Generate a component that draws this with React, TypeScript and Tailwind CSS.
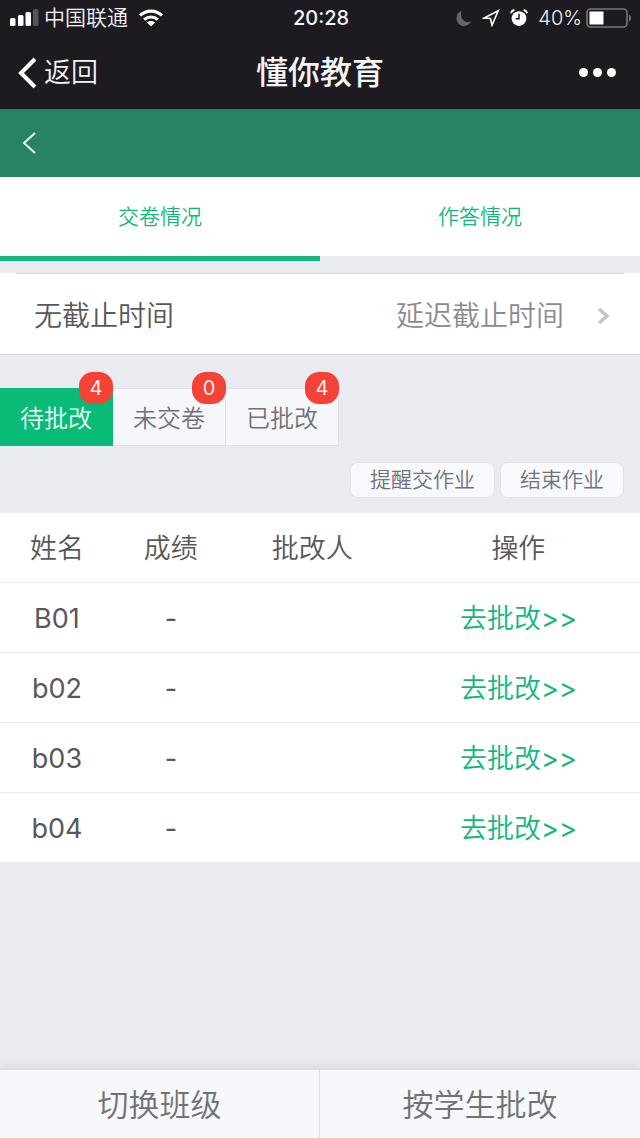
import { useState } from 'react'

interface Student {
  name: string
  score: string
  reviewer: string
}

const students: Student[] = [
  { name: 'B01', score: '-', reviewer: '' },
  { name: 'b02', score: '-', reviewer: '' },
  { name: 'b03', score: '-', reviewer: '' },
  { name: 'b04', score: '-', reviewer: '' },
]

const tabs = [
  { key: 'submit', label: '交卷情况' },
  { key: 'answer', label: '作答情况' },
]

const filters = [
  { key: 'pending', label: '待批改', count: 4 },
  { key: 'missing', label: '未交卷', count: 0 },
  { key: 'done', label: '已批改', count: 4 },
]

const StatusBar = () => (
  <div className="grid h-9 grid-cols-[1fr_auto_1fr] items-center pl-2.5 pr-2 text-xl text-gray-100">
    <div className="flex items-center">
      <svg width="30" height="18" viewBox="0 0 30 18" fill="#fff">
        <rect x="0" y="9" width="5.5" height="8" rx="1.5" />
        <rect x="8" y="6" width="5.5" height="11" rx="1.5" />
        <rect x="15.5" y="3" width="5.5" height="14" rx="1.5" />
        <rect x="23" y="0" width="5.5" height="17" rx="1.5" fill="#55545a" />
      </svg>
      <span className="ml-1 text-[21px] font-[350]">中国联通</span>
      <svg className="ml-2.5" width="26" height="18" viewBox="0 0 26 18" fill="none" stroke="#fff" strokeWidth="3.2">
        <path d="M2 6.4C8.3 0.7 17.7 0.7 24 6.4" />
        <path d="M6.2 10.6C10.2 7.1 15.8 7.1 19.8 10.6" />
        <path d="M13 17.5L8.9 13.4C11.2 11.4 14.8 11.4 17.1 13.4Z" fill="#fff" stroke="none" />
      </svg>
    </div>
    <time className="font-medium">20:28</time>
    <div className="flex items-center justify-end">
      <svg width="16" height="17" viewBox="0 0 16 17" fill="#66656b">
        <path d="M5.5 0.8C-1 3.3-1 12.8 5 15.4C9.3 17.2 13.5 15 15.2 11.6C8.4 13.6 3.2 8 5.5 0.8Z" />
      </svg>
      <svg className="ml-2.5" width="18" height="18" viewBox="0 0 18 18" fill="none" stroke="#fff" strokeWidth="1.6">
        <path d="M16.2 1.8L2.2 9L8.4 9.4L10 16.2Z" />
      </svg>
      <svg className="ml-2.5" width="18" height="18" viewBox="0 0 18 18" fill="none">
        <circle cx="9" cy="9.6" r="7.4" fill="#fff" />
        <path d="M1 4.2C1.4 2.3 2.6 1.3 4.4 1M17 4.2C16.6 2.3 15.4 1.3 13.6 1" stroke="#fff" strokeWidth="1.8" />
        <path d="M9 4.8V9.8H5.6" stroke="#1d1b20" strokeWidth="1.5" />
      </svg>
      <span className="ml-2.5 font-[350]">40%</span>
      <svg className="ml-1" width="46" height="20" viewBox="0 0 46 20">
        <rect x="1" y="1" width="40" height="18" rx="3.5" fill="none" stroke="#77767b" strokeWidth="1.6" />
        <rect x="3.5" y="3.5" width="14" height="13" fill="#fff" />
        <path d="M43 6.5C45.6 7.5 45.6 12.5 43 13.5Z" fill="#77767b" />
      </svg>
    </div>
  </div>
)

const NavBar = () => (
  <div className="grid h-[73px] grid-cols-[1fr_auto_1fr] items-center px-5 text-gray-100">
    <button type="button" className="-ml-1 flex items-center gap-1.5 justify-self-start text-[27px] font-[350]">
      <svg width="22" height="32" viewBox="0 0 22 32" fill="none" stroke="#fff" strokeWidth="4">
        <path d="M19 2L5 16L19 30" />
      </svg>
      <span className="pt-0.5">返回</span>
    </button>
    <h1 className="text-[32px] font-medium">懂你教育</h1>
    <button type="button" aria-label="更多" className="mr-1 justify-self-end">
      <svg width="37" height="10" viewBox="0 0 37 10" fill="#fff">
        <circle cx="4.5" cy="4.5" r="4.5" />
        <circle cx="18.5" cy="4.5" r="4.5" />
        <circle cx="32.5" cy="4.5" r="4.5" />
      </svg>
    </button>
  </div>
)

const App = () => {
  const [tab, setTab] = useState('submit')
  const [filter, setFilter] = useState('pending')

  return (
    <div className="flex min-h-screen flex-col bg-[#e9ebf0] font-['Inter','Noto_Sans_CJK_SC',sans-serif] text-[#58575b]">
      <header className="bg-[#1d1b20]">
        <StatusBar />
        <NavBar />
      </header>

      <div className="flex h-[68px] items-center bg-[#288264] pl-5">
        <button type="button" aria-label="后退">
          <svg width="20" height="24" viewBox="0 0 20 24" fill="none" stroke="#e6fff5" strokeWidth="2">
            <path d="M15 2L4 12L15 22" />
          </svg>
        </button>
      </div>

      <nav className="grid grid-cols-2 text-[21px] font-[350] text-[#15b67c]">
        {tabs.map(item => (
          <button
            key={item.key}
            type="button"
            onClick={() => setTab(item.key)}
            className={`border-b-[5px] ${tab === item.key ? 'border-[#15b67c]' : 'border-[#e9ebf0]'}`}
          >
            <span className="flex h-[79px] items-center justify-center bg-white">{item.label}</span>
          </button>
        ))}
      </nav>

      <section className="mt-3 border-b border-[#d9dadf] bg-white font-[350]">
        <div className="mx-4 border-t border-[#d9dadf]" />
        <div className="flex h-20 items-center justify-between pl-[34px] pr-[30px] pt-1 text-[28px]">
          <span>无截止时间</span>
          <button type="button" className="flex items-center gap-8 text-[#8b8a8f]">
            延迟截止时间
            <svg width="14" height="18" viewBox="0 0 14 18" fill="none" stroke="#c4c3c8" strokeWidth="3.5">
              <path d="M3 2L11 9L3 16" />
            </svg>
          </button>
        </div>
      </section>

      <div className="mt-[33px] flex text-2xl font-[350]">
        {filters.map(item => (
          <button
            key={item.key}
            type="button"
            onClick={() => setFilter(item.key)}
            className={`relative h-[58px] w-[113px] border-y border-r pt-1 ${
              filter === item.key
                ? 'border-[#0abb77] bg-[#0abb77] text-[#e9fff6]'
                : 'border-[#dfe1e6] bg-[#f6f7fb] text-[#727177]'
            }`}
          >
            {item.label}
            <span className="absolute -right-px -top-[17px] flex h-8 w-[34px] items-center justify-center rounded-[14px] bg-[#f44236] text-xl font-normal text-[#fdeeee]">
              {item.count}
            </span>
          </button>
        ))}
      </div>

      <div className="flex justify-end gap-[5px] px-4 pb-[15px] pt-4 text-[21px] font-[350] text-[#727177]">
        <button type="button" className="h-9 rounded-lg border border-[#e2e3e9] bg-[#f8f9fd] px-[19px]">提醒交作业</button>
        <button type="button" className="h-9 rounded-lg border border-[#e2e3e9] bg-[#f8f9fd] px-[19px]">结束作业</button>
      </div>

      <table className="w-full table-fixed bg-white text-center text-[27px]">
        <colgroup>
          <col className="w-[17.8%]" />
          <col className="w-[17.8%]" />
          <col className="w-[26.4%]" />
          <col className="w-[38%]" />
        </colgroup>
        <thead>
          <tr className="h-[69px] border-b border-[#e9e8ee]">
            <th className="pt-1 font-[350]">姓名</th>
            <th className="pt-1 font-[350]">成绩</th>
            <th className="pt-1 font-[350]">批改人</th>
            <th className="pt-1 font-[350]">操作</th>
          </tr>
        </thead>
        <tbody>
          {students.map(student => (
            <tr key={student.name} className="h-[70px] border-b border-[#e9e8ee]">
              <td className="pt-1">{student.name}</td>
              <td className="pt-1">{student.score}</td>
              <td className="pt-1">{student.reviewer}</td>
              <td className="pt-1">
                <a href="#" className="text-[#15b67c]">
                  <span className="font-[350]">去批改</span>&gt;&gt;
                </a>
              </td>
            </tr>
          ))}
        </tbody>
      </table>

      <footer className="mt-auto grid grid-cols-2 divide-x divide-[#e2e3e9] border-t border-[#dcdde3] bg-[#f7f8fc] text-[31px] font-[350] text-[#727177] shadow-[0_-2px_10px_rgba(80,80,140,0.12)]">
        <button type="button" className="h-[68px] pt-0.5">切换班级</button>
        <button type="button" className="h-[68px] pt-0.5">按学生批改</button>
      </footer>
    </div>
  )
}

export default App
